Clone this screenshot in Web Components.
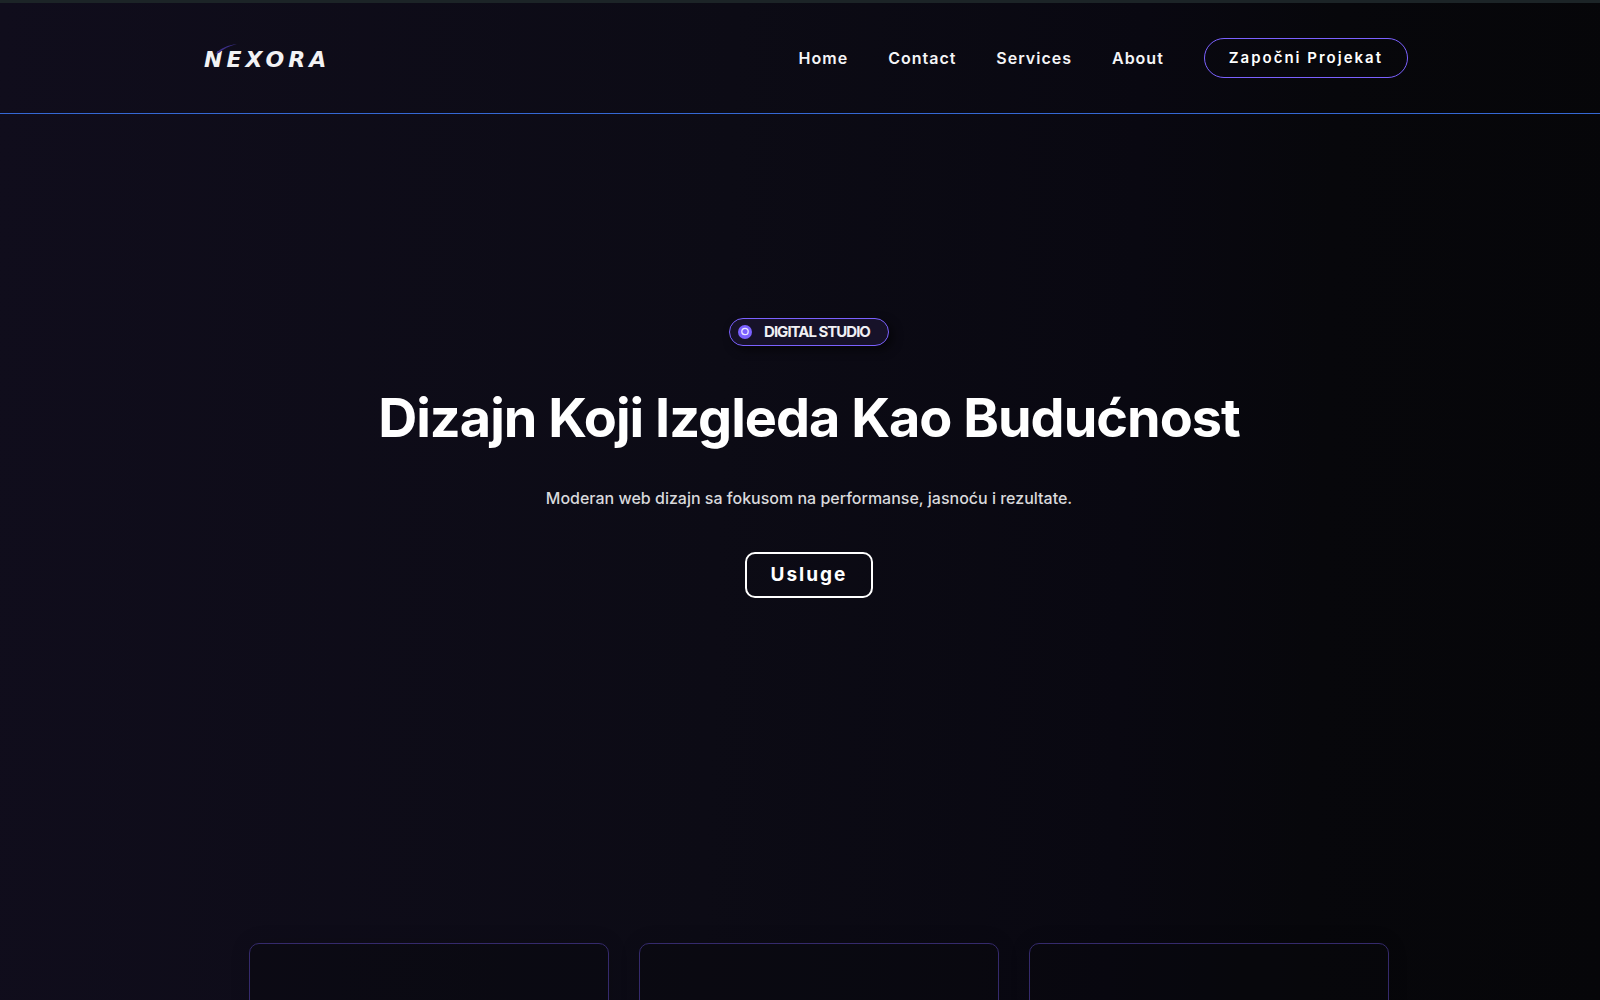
<!DOCTYPE html>
<html lang="sr">
<head>
<meta charset="utf-8">
<meta name="viewport" content="width=device-width, initial-scale=1">
<title>Nexora</title>
<style>
  html { background: #060608; }
  body {
    margin: 0;
    min-height: 100vh;
    overflow-x: hidden;
    background: linear-gradient(92deg, #100d1c 0%, #0c0b15 45%, #090811 70%, #07070b 82%, #060609 100%);
    color: #fff;
    font-family: Inter, "Liberation Sans", sans-serif;
  }
</style>
</head>
<body>
<nexora-page></nexora-page>
<script>
const define = (name, html) => {
  const template = document.createElement('template');
  template.innerHTML = html;
  customElements.define(name, class extends HTMLElement {
    constructor() {
      super();
      this.attachShadow({ mode: 'open' }).append(template.content.cloneNode(true));
    }
  });
};

define('nexora-logo', `
  <style>
    :host { display: block; padding-top: 4px; }
    a { position: relative; display: block; color: #f2f2f4; text-decoration: none;
        font: italic 700 22px/26px "DejaVu Sans", sans-serif; letter-spacing: 4px; }
    svg { position: absolute; left: 10px; top: -4px; width: 24px; height: 12px; }
  </style>
  <a href="#home">NEXORA<svg viewBox="0 0 24 12" aria-hidden="true"><path d="M1 11C7 5 14 2 23 1C15 3 9 6 5 10Z" fill="#3b2e86"/></svg></a>
`);

define('nexora-nav-link', `
  <style>
    :host { display: block; }
    a { display: block; color: #f5f5f7; text-decoration: none; font-weight: 600; font-size: 16px; line-height: 20px; letter-spacing: 1px; }
  </style>
  <a href="#"><slot></slot></a>
`);

define('nexora-button', `
  <style>
    :host { display: block; }
    button { display: block; box-sizing: border-box; margin: 0; height: 40px; padding: 0 24px; border: 1px solid #7b61ff; border-radius: 20px;
      background: transparent; color: #fff; font: 600 15px/20px Inter, sans-serif; letter-spacing: 2px; cursor: pointer; white-space: nowrap; }
    :host([large]) button { height: 46px; border: 2px solid #fff; border-radius: 10px; font-weight: 700; font-size: 19px; }
  </style>
  <button type="button"><slot></slot></button>
`);

define('nexora-header', `
  <style>
    :host { display: block; border-top: 3px solid #1c2427; border-bottom: 1px solid #3568d4; }
    header { box-sizing: border-box; min-height: 110px; padding: 0 12% 0 204px; display: flex; align-items: center; justify-content: space-between; }
    nav { display: flex; align-items: center; gap: 40px; }
  </style>
  <header>
    <nexora-logo></nexora-logo>
    <nav>
      <nexora-nav-link>Home</nexora-nav-link>
      <nexora-nav-link>Contact</nexora-nav-link>
      <nexora-nav-link>Services</nexora-nav-link>
      <nexora-nav-link>About</nexora-nav-link>
      <nexora-button>Započni Projekat</nexora-button>
    </nav>
  </header>
`);

define('nexora-badge', `
  <style>
    :host { display: flex; align-items: center; gap: 12px; box-sizing: border-box; height: 28px; padding: 0 18px 0 8px;
      border: 1px solid #7b61ff; border-radius: 14px; background: #171229; box-shadow: 4px 4px 10px #0008;
      color: #f0eff4; font-weight: 700; font-size: 15px; line-height: 20px; letter-spacing: -1px; }
    svg { display: block; width: 14px; height: 14px; }
  </style>
  <svg viewBox="0 0 14 14" aria-hidden="true"><circle cx="7" cy="7" r="7" fill="#7b61ff"/><circle cx="7" cy="6.5" r="3.2" fill="none" stroke="#e9e4ff" stroke-width="1.3"/></svg>
  <span><slot></slot></span>
`);

define('nexora-hero', `
  <style>
    :host { display: flex; flex-direction: column; align-items: center; padding: 204px 0 0 18px; text-align: center; }
    h1 { margin: 36px 0 0; font-weight: 700; font-size: 54px; line-height: 72px; letter-spacing: -1px; }
    p { margin: 32px 0 0; color: #d9d9dc; font-weight: 500; font-size: 16px; line-height: 24px; }
    nexora-button { margin-top: 42px; }
  </style>
  <nexora-badge>DIGITAL STUDIO</nexora-badge>
  <h1>Dizajn Koji Izgleda Kao Budućnost</h1>
  <p>Moderan web dizajn sa fokusom na performanse, jasnoću i rezultate.</p>
  <nexora-button large>Usluge</nexora-button>
`);

define('nexora-card', `
  <style>
    :host { display: block; min-height: 240px; border: 1px solid #352a6c; border-radius: 10px; background: #07080c66; box-shadow: 0 0 20px #0002; }
  </style>
  <slot></slot>
`);

define('nexora-page', `
  <style>
    :host { display: block; height: 100vh; overflow: hidden; }
    section { display: grid; grid-template-columns: repeat(3, minmax(0, 1fr)); gap: 30px; max-width: 1140px; margin: 345px auto 0; padding-left: 38px; }
  </style>
  <nexora-header></nexora-header>
  <main>
    <nexora-hero></nexora-hero>
    <section>
      <nexora-card></nexora-card>
      <nexora-card></nexora-card>
      <nexora-card></nexora-card>
    </section>
  </main>
`);
</script>
</body>
</html>
